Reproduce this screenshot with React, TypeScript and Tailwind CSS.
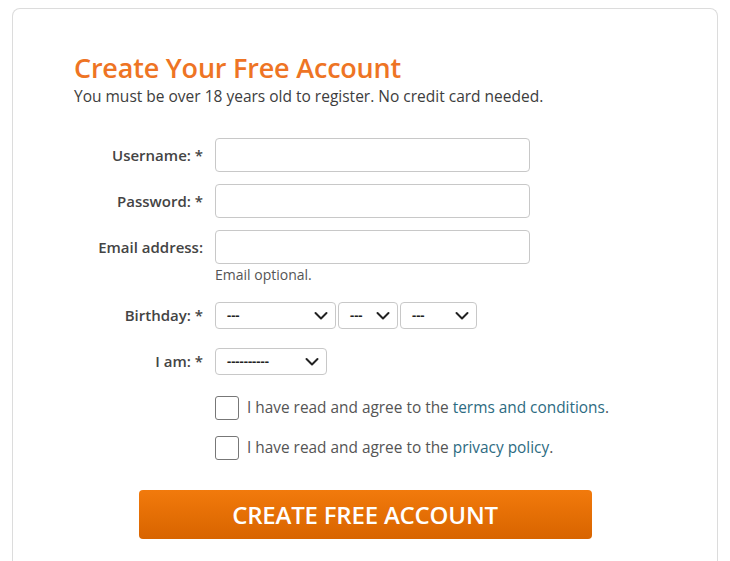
import React from "react";

const Chevron = () => (
  <svg width="14" height="9" viewBox="0 0 14 9" className="pointer-events-none absolute right-[7px] top-1/2 -translate-y-1/2">
    <path d="M1.5 1.5 L7 7 L12.5 1.5" fill="none" stroke="#222" strokeWidth="2" strokeLinecap="round" strokeLinejoin="round" />
  </svg>
);

const Select = ({ w, text }: { w: string; text: string }) => (
  <div className={`relative h-[27px] ${w} rounded-[4px] border border-[#c8c8c8] bg-white`}>
    <span className="absolute left-[11px] top-[3px] text-[13px] font-bold text-[#222]">{text}</span>
    <Chevron />
  </div>
);

export default function App() {
  return (
    <div className="min-h-[561px] bg-white pl-[12px] pt-[8px]" style={{ fontFamily: '"Open Sans", "Noto Sans", sans-serif' }}>
      <div className="h-[560px] w-[706px] rounded-t-[8px] border border-b-0 border-[#dcdcdc] px-[61px] pt-[42px]">
        <h1 className="text-[27px] leading-[34px] font-semibold text-[#ee7424] tracking-[-0.2px]">Create Your Free Account</h1>
        <p className="mt-[1px] text-[15.5px] leading-[20px] text-[#3d3d3d]">You must be over 18 years old to register. No credit card needed.</p>

        <div className="mt-[32px] flex flex-col text-[15px] text-[#444]">
          <div className="flex items-center">
            <label className="w-[130px] pr-[1px] text-right font-semibold">Username: *</label>
            <input className="ml-[11px] h-[34px] w-[315px] rounded-[4px] border border-[#c8c8c8]" />
          </div>
          <div className="mt-[12px] flex items-center">
            <label className="w-[130px] pr-[1px] text-right font-semibold">Password: *</label>
            <input className="ml-[11px] h-[34px] w-[315px] rounded-[4px] border border-[#c8c8c8]" />
          </div>
          <div className="mt-[12px] flex items-center">
            <label className="w-[130px] pr-[1px] text-right font-semibold">Email address:</label>
            <input className="ml-[11px] h-[34px] w-[315px] rounded-[4px] border border-[#c8c8c8]" />
          </div>
          <div className="ml-[141px] mt-[2px] text-[14px] leading-[18px] text-[#555]">Email optional.</div>

          <div className="mt-[18px] flex items-center">
            <label className="w-[130px] pr-[1px] text-right font-semibold">Birthday: *</label>
            <div className="ml-[11px] flex gap-[2px]">
              <Select w="w-[121px]" text="---" />
              <Select w="w-[60px]" text="---" />
              <Select w="w-[77px]" text="---" />
            </div>
          </div>
          <div className="mt-[19px] flex items-center">
            <label className="w-[130px] pr-[1px] text-right font-semibold">I am: *</label>
            <div className="ml-[11px]">
              <Select w="w-[112px]" text="----------" />
            </div>
          </div>

          <div className="ml-[141px] mt-[21px] flex items-center">
            <span className="h-[24px] w-[24px] rounded-[3px] border border-[#777] bg-white" />
            <span className="ml-[8px] text-[15.4px] text-[#555]">
              I have read and agree to the <a className="text-[#2d6b82]">terms and conditions</a>.
            </span>
          </div>
          <div className="ml-[141px] mt-[16px] flex items-center">
            <span className="h-[24px] w-[24px] rounded-[3px] border border-[#777] bg-white" />
            <span className="ml-[8px] text-[15.4px] text-[#555]">
              I have read and agree to the <a className="text-[#2d6b82]">privacy policy</a>.
            </span>
          </div>

          <div className="mt-[30px] flex justify-center">
            <button className="h-[49px] w-[453px] rounded-[4px] bg-gradient-to-b from-[#f27a0c] to-[#d86400] text-[24px] font-semibold text-white tracking-[-0.2px]">
              CREATE FREE ACCOUNT
            </button>
          </div>
        </div>
      </div>
    </div>
  );
}
